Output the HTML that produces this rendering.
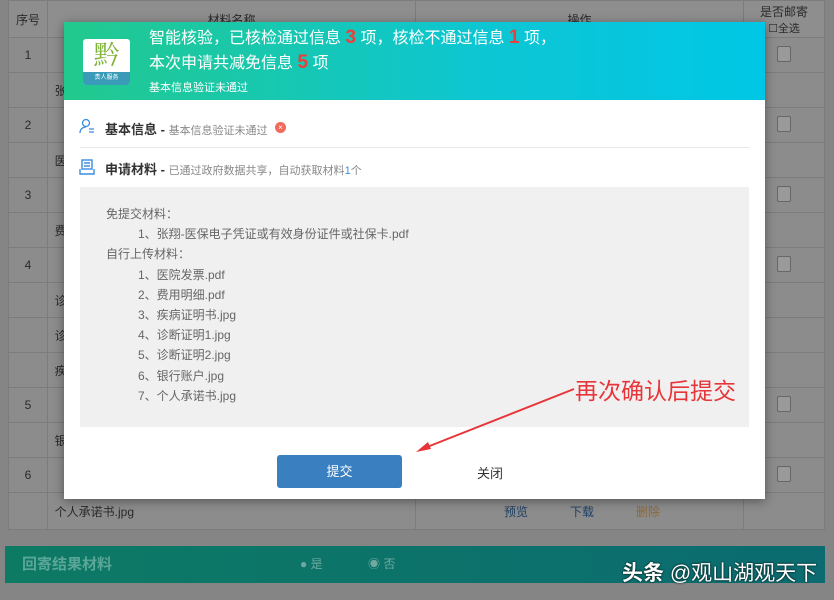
<!DOCTYPE html>
<html><head><meta charset="utf-8"><style>
*{margin:0;padding:0;box-sizing:border-box}
body{width:834px;height:600px;overflow:hidden;background:#858585;font-family:"Liberation Sans","Noto Sans CJK SC",sans-serif;position:relative;font-size:12px;color:#333}
.abs{position:absolute}
table{position:absolute;left:8px;top:0;width:817px;border-collapse:collapse;background:#8c8c8c}
td,th{border:1px solid #7c7c7c;height:35px;font-weight:normal;color:#2a2a2a;font-size:12px}
th{height:37px;background:#8e8e8e}
.cb{display:inline-block;width:14px;height:16px;border:1px solid #666;border-radius:2px;background:#9a9a9a}
.modal{left:64px;top:22px;width:701px;height:477px;background:#fff;box-shadow:0 2px 10px rgba(0,0,0,.4)}
.hd{left:0;top:0;width:701px;height:78px;background:linear-gradient(90deg,#22c98d,#0dc6d3 60%,#00c7e6)}
.hd .t{color:#fff;font-size:16px;line-height:24px}
.r{color:#e8403a;font-weight:bold;font-size:19px}
.list div{height:20.2px;line-height:20px;color:#666;font-size:12px}
</style></head><body>
<table>
<tr><th style="width:39px">序号</th><th style="width:368px">材料名称</th><th style="width:328px">操作</th><th>是否邮寄<br><span style="font-size:11px">☐全选</span></th></tr>
<tr><td align="center">1</td><td></td><td></td><td align="center"><span class="cb"></span></td></tr>
<tr><td></td><td>&nbsp;&nbsp;张</td><td></td><td></td></tr>
<tr><td align="center">2</td><td></td><td></td><td align="center"><span class="cb"></span></td></tr>
<tr><td></td><td>&nbsp;&nbsp;医</td><td></td><td></td></tr>
<tr><td align="center">3</td><td></td><td></td><td align="center"><span class="cb"></span></td></tr>
<tr><td></td><td>&nbsp;&nbsp;费</td><td></td><td></td></tr>
<tr><td align="center">4</td><td></td><td></td><td align="center"><span class="cb"></span></td></tr>
<tr><td></td><td>&nbsp;&nbsp;诊</td><td></td><td></td></tr>
<tr><td></td><td>&nbsp;&nbsp;诊</td><td></td><td></td></tr>
<tr><td></td><td>&nbsp;&nbsp;疾</td><td></td><td></td></tr>
<tr><td align="center">5</td><td></td><td></td><td align="center"><span class="cb"></span></td></tr>
<tr><td></td><td>&nbsp;&nbsp;银</td><td></td><td></td></tr>
<tr><td align="center">6</td><td></td><td></td><td align="center"><span class="cb"></span></td></tr>
<tr><td style="height:37px"></td><td>&nbsp;&nbsp;个人承诺书.jpg</td><td><span style="margin-left:88px;color:#1f3f66">预览</span><span style="margin-left:42px;color:#1f3f66">下载</span><span style="margin-left:42px;color:#8a6a40">删除</span></td><td></td></tr>
</table>
<div class="abs" style="left:5px;top:546px;width:820px;height:37px;background:linear-gradient(90deg,#0d7a64,#0b6b70);color:#5aa698;font-size:15px;font-weight:bold;line-height:37px;padding-left:17px">回寄结果材料<span style="position:absolute;left:295px;font-size:12px;font-weight:normal;color:#6fa9a0">● 是</span><span style="position:absolute;left:363px;font-size:12px;font-weight:normal;color:#6fa9a0">◉ 否</span></div>
<div class="abs" style="left:622px;top:557px;color:#fff;font-size:21px;text-shadow:0 0 2px #000"><b>头条</b> @观山湖观天下</div>

<div class="abs modal">
 <div class="abs hd">
  <div class="abs" style="left:19px;top:17px;width:47px;height:46px;background:#fff;border-radius:3px;overflow:hidden">
   <div style="color:#7fb43a;font-size:26px;line-height:30px;text-align:center;font-family:'Noto Serif CJK SC',serif">黔</div>
   <div style="position:absolute;bottom:0;left:0;width:47px;height:13px;background:#3a9bb8;color:#fff;font-size:6px;text-align:center;line-height:13px">贵人服务</div>
  </div>
  <div class="abs t" style="left:85px;top:4px">智能核验，已核检通过信息 <span class="r">3</span> 项，核检不通过信息 <span class="r">1</span> 项，</div>
  <div class="abs t" style="left:85px;top:29px">本次申请共减免信息 <span class="r">5</span> 项</div>
  <div class="abs" style="left:85px;top:57px;color:#fff;font-size:11px">基本信息验证未通过</div>
 </div>
 <svg class="abs" style="left:15px;top:96px" width="16" height="16" viewBox="0 0 16 16" fill="none" stroke="#3b8de0" stroke-width="1.3"><circle cx="7" cy="5" r="3.5"/><path d="M1 15c0-4 3-6 6-6M10 11h5M10 14h5"/></svg>
 <div class="abs" style="left:41px;top:97px;font-size:13px;font-weight:bold;color:#333">基本信息 - <span style="font-weight:normal;color:#888;font-size:11px">基本信息验证未通过</span></div>
 <div class="abs" style="left:211px;top:100px;width:11px;height:11px;border-radius:50%;background:#f26a5a;color:#fff;font-size:8px;line-height:11px;text-align:center">×</div>
 <div class="abs" style="left:16px;top:125px;width:670px;height:1px;background:#e8e8e8"></div>
 <svg class="abs" style="left:15px;top:137px" width="16" height="16" viewBox="0 0 16 16" fill="none" stroke="#3b8de0" stroke-width="1.4"><rect x="3" y="1" width="10" height="9"/><path d="M5 4h6M5 7h6M1 10v5h14v-5"/></svg>
 <div class="abs" style="left:41px;top:137px;font-size:13px;font-weight:bold;color:#333">申请材料 - <span style="font-weight:normal;color:#888;font-size:11px">已通过政府数据共享，自动获取材料<span style="color:#3b8de0">1</span>个</span></div>
 <div class="abs list" style="left:16px;top:165px;width:669px;height:240px;background:#f0f0f0;padding:17px 0 0 26px">
  <div>免提交材料：</div>
  <div style="padding-left:32px">1、张翔-医保电子凭证或有效身份证件或社保卡.pdf</div>
  <div>自行上传材料：</div>
  <div style="padding-left:32px">1、医院发票.pdf</div>
  <div style="padding-left:32px">2、费用明细.pdf</div>
  <div style="padding-left:32px">3、疾病证明书.jpg</div>
  <div style="padding-left:32px">4、诊断证明1.jpg</div>
  <div style="padding-left:32px">5、诊断证明2.jpg</div>
  <div style="padding-left:32px">6、银行账户.jpg</div>
  <div style="padding-left:32px">7、个人承诺书.jpg</div>
 </div>
 <div class="abs" style="left:213px;top:433px;width:125px;height:33px;background:#3a7fc0;border-radius:3px;color:#fff;text-align:center;line-height:33px;font-size:13px">提交</div>
 <div class="abs" style="left:413px;top:441px;font-size:13px;color:#333">关闭</div>
</div>
<svg class="abs" style="left:0;top:0" width="834" height="600"><path d="M574 389L422 449" stroke="#e8353a" stroke-width="2"/><path d="M416 452l12-10 3 7z" fill="#e8353a"/></svg>
<div class="abs" style="left:575px;top:372px;font-size:23px;color:#e8353a">再次确认后提交</div>
</body></html>
